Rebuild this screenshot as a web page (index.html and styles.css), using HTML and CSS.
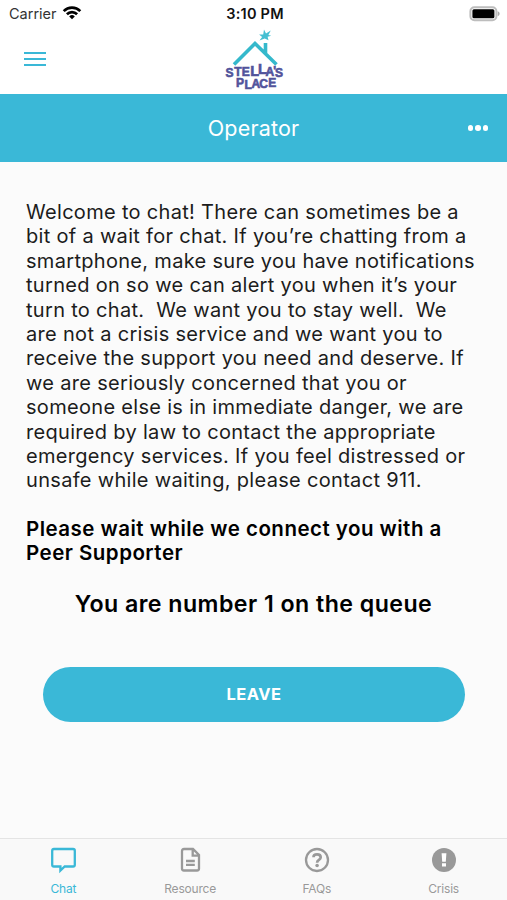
FILE: index.html
```html
<!DOCTYPE html>
<html lang="en">
  <head>
    <meta charset="utf-8" />
    <title>Stella's Place Chat</title>
    <link rel="stylesheet" href="styles.css">
  </head>
  <body>
    <div class="status-bar">
      <div class="carrier">
        <span>Carrier</span>
        <svg width="20" height="15" viewBox="0 0 20 15">
          <g fill="none" stroke="#000" stroke-width="2.7">
            <path d="M1.7 6.1a11.7 11.7 0 0 1 16.6 0" />
            <path d="M4.9 9.3a7.2 7.2 0 0 1 10.2 0" />
          </g>
          <path d="M10 14.3l-2.8-2.9a4 4 0 0 1 5.6 0z" />
        </svg>
      </div>
      <div class="time">3:10 PM</div>
      <svg class="battery" width="32" height="16" viewBox="0 0 32 16">
        <rect x="1.4" y="1.2" width="26" height="13" rx="4" fill="#fff" stroke="#bdbdbd" stroke-width="2" />
        <rect x="3.4" y="3.2" width="22" height="9" rx="1.5" />
        <path d="M28.7 5.3c2.6 1 2.6 3.9 0 4.9z" fill="#aaa" />
      </svg>
    </div>

    <header class="top-bar">
      <button class="menu" aria-label="Menu"><i></i><i></i><i></i></button>
      <svg class="logo" width="64" height="66" viewBox="0 0 64 66">
        <path d="M12 37.5 33 16.5 54.5 37.5M43.5 27V16" fill="none" stroke="#35b9cc" stroke-width="3.6" />
        <path d="M37.5 13.5l2.6-3.5-3-2.6 4.1.2.8-5 2 3.9 4.8-3-2.4 4.4 2.8.9-3.6 1 .9 3.4-3.8-1.6z" fill="#45bfd2" />
        <g class="logo-text">
          <text x="3.6 12.3 19.8 28.2 36 43.4 51.2 53" y="49.5 49.3 49.3 49.3 47.3 49.3 48 49.6">STE<tspan font-size="14.5">LL</tspan>A'S</text>
          <text x="14 22.4 29.6 37.3 46.3" y="60.3 62.3 61.3 60.7 60.3">PLACE</text>
        </g>
      </svg>
    </header>

    <div class="title-bar">
      <h1>Operator</h1>
      <button class="more" aria-label="More"><i></i><i></i><i></i></button>
    </div>

    <main>
      <p class="welcome">Welcome to chat! There can sometimes be a
bit of a wait for chat. If you’re chatting from a
smartphone, make sure you have notifications
turned on so we can alert you when it’s your
turn to chat.  We want you to stay well.  We
are not a crisis service and we want you to
receive the support you need and deserve. If
we are seriously concerned that you or
someone else is in immediate danger, we are
required by law to contact the appropriate
emergency services. If you feel distressed or
unsafe while waiting, please contact 911.</p>
      <p class="wait">Please wait while we connect you with a
Peer Supporter</p>
      <p class="queue">You are number 1 on the queue</p>
      <button class="leave">LEAVE</button>
    </main>

    <nav class="tabs">
      <a class="tab active">
        <svg width="28" height="28" viewBox="0 0 28 28">
          <path d="M4.9 3h19.2q1.7 0 1.7 1.7v14.1q0 1.7-1.7 1.7H15.7L11.4 24.5v-4H4.9q-1.7 0-1.7-1.7V4.7Q3.2 3 4.9 3z" />
        </svg>
        <span>Chat</span>
      </a>
      <a class="tab">
        <svg width="28" height="28" viewBox="0 0 28 28">
          <path d="M8 3h9l6 6v13.5q0 2-2 2H8q-2 0-2-2V5q0-2 2-2zM16.7 3v6.6h6.3M10 15h8.8M10 18.8h8.8" />
        </svg>
        <span>Resource</span>
      </a>
      <a class="tab">
        <svg width="28" height="28" viewBox="0 0 28 28">
          <circle cx="14" cy="14" r="11" />
          <path class="mark" d="M10.5 11.2C10.5 9.3 12 8.4 14.1 8.4c2.2 0 3.6 1.1 3.6 2.9 0 2.8-3.6 2.4-3.6 5.4" />
          <circle class="dot" cx="14.1" cy="19.5" r="1.8" />
        </svg>
        <span>FAQs</span>
      </a>
      <a class="tab">
        <svg width="28" height="28" viewBox="0 0 28 28">
          <circle class="dot" cx="14" cy="14" r="12" />
          <path class="bang" d="M11.6 7.3h4.8l-.6 8.4h-3.6zM12 17.3h4v3.3h-4z" />
        </svg>
        <span>Crisis</span>
      </a>
    </nav>
  </body>
</html>
```
FILE: styles.css
```css
* {
  box-sizing: border-box;
}
body {
  margin: 0;
  height: 900px;
  display: flex;
  flex-direction: column;
  background: #fbfbfb;
  color: #1c1c1c;
  font-family: Inter, sans-serif;
  overflow: hidden;
}
button {
  border: none;
  padding: 0;
  background: none;
  font-family: inherit;
}
.status-bar {
  height: 27px;
  padding: 0 6px 0 9px;
  display: grid;
  grid-template-columns: 1fr auto 1fr;
  align-items: center;
  background: #fff;
  font-size: 14.5px;
}
.carrier {
  display: flex;
  align-items: center;
  gap: 5px;
  color: #333;
}
.carrier svg {
  margin-top: -3px;
}
.time {
  font-weight: 600;
  letter-spacing: 0.25px;
  color: #111;
}
.battery {
  justify-self: end;
}
.top-bar {
  height: 67px;
  padding: 0 24px;
  display: grid;
  grid-template-columns: 1fr auto 1fr;
  align-items: start;
  background: #fff;
}
.menu {
  display: grid;
  gap: 4px;
  width: 22px;
  margin-top: 25px;
}
.menu i {
  height: 2px;
  background: #3ab8d7;
}
.logo-text {
  font-family: "Liberation Sans", sans-serif;
  font-size: 12px;
  font-weight: bold;
  fill: #51539b;
  stroke: #51539b;
  stroke-width: 0.6;
}
.title-bar {
  height: 68px;
  padding: 0 19px;
  display: grid;
  grid-template-columns: 1fr auto 1fr;
  align-items: center;
  background: #3ab8d7;
  color: #fff;
}
h1 {
  grid-column: 2;
  margin: 0;
  font-size: 21.5px;
  font-weight: 400;
  letter-spacing: 0.2px;
}
.more {
  justify-self: end;
  display: flex;
  gap: 2px;
}
.more i {
  width: 5.5px;
  height: 5.5px;
  border-radius: 50%;
  background: #fff;
}
main {
  flex: 1;
  padding: 38px 26px 0;
  display: flex;
  flex-direction: column;
}
p {
  margin: 0;
  font-size: 20px;
  line-height: 24.4px;
  letter-spacing: 0.31px;
  white-space: pre;
}
.wait {
  margin-top: 24px;
  font-size: 20.5px;
  font-weight: 600;
  letter-spacing: 0.48px;
  color: #000;
}
.queue {
  margin-top: 24px;
  font-size: 23.2px;
  line-height: 28px;
  font-weight: 600;
  letter-spacing: 0.45px;
  text-align: center;
  color: #000;
}
.leave {
  height: 55px;
  margin: 49px 16px 0 17px;
  border-radius: 28px;
  background: #3ab8d7;
  color: #fff;
  font-size: 16.5px;
  font-weight: 700;
  letter-spacing: 0.5px;
}
.tabs {
  height: 62px;
  display: grid;
  grid-template-columns: repeat(4, 1fr);
  border-top: 1px solid #e4e4e4;
  background: #f9f9f9;
}
.tab {
  display: flex;
  flex-direction: column;
  align-items: center;
  padding-top: 7px;
  color: #999;
  font-size: 12px;
  letter-spacing: -0.2px;
  line-height: 16px;
}
.tab span {
  margin-top: 7px;
}
.tab svg {
  fill: none;
  stroke: currentColor;
  stroke-width: 2.3;
}
.tab .mark {
  stroke-width: 2.7;
}
.tab .dot {
  fill: currentColor;
  stroke: none;
}
.tab .bang {
  fill: #fff;
  stroke: none;
}
.active {
  color: #3ab8d7;
}
```
